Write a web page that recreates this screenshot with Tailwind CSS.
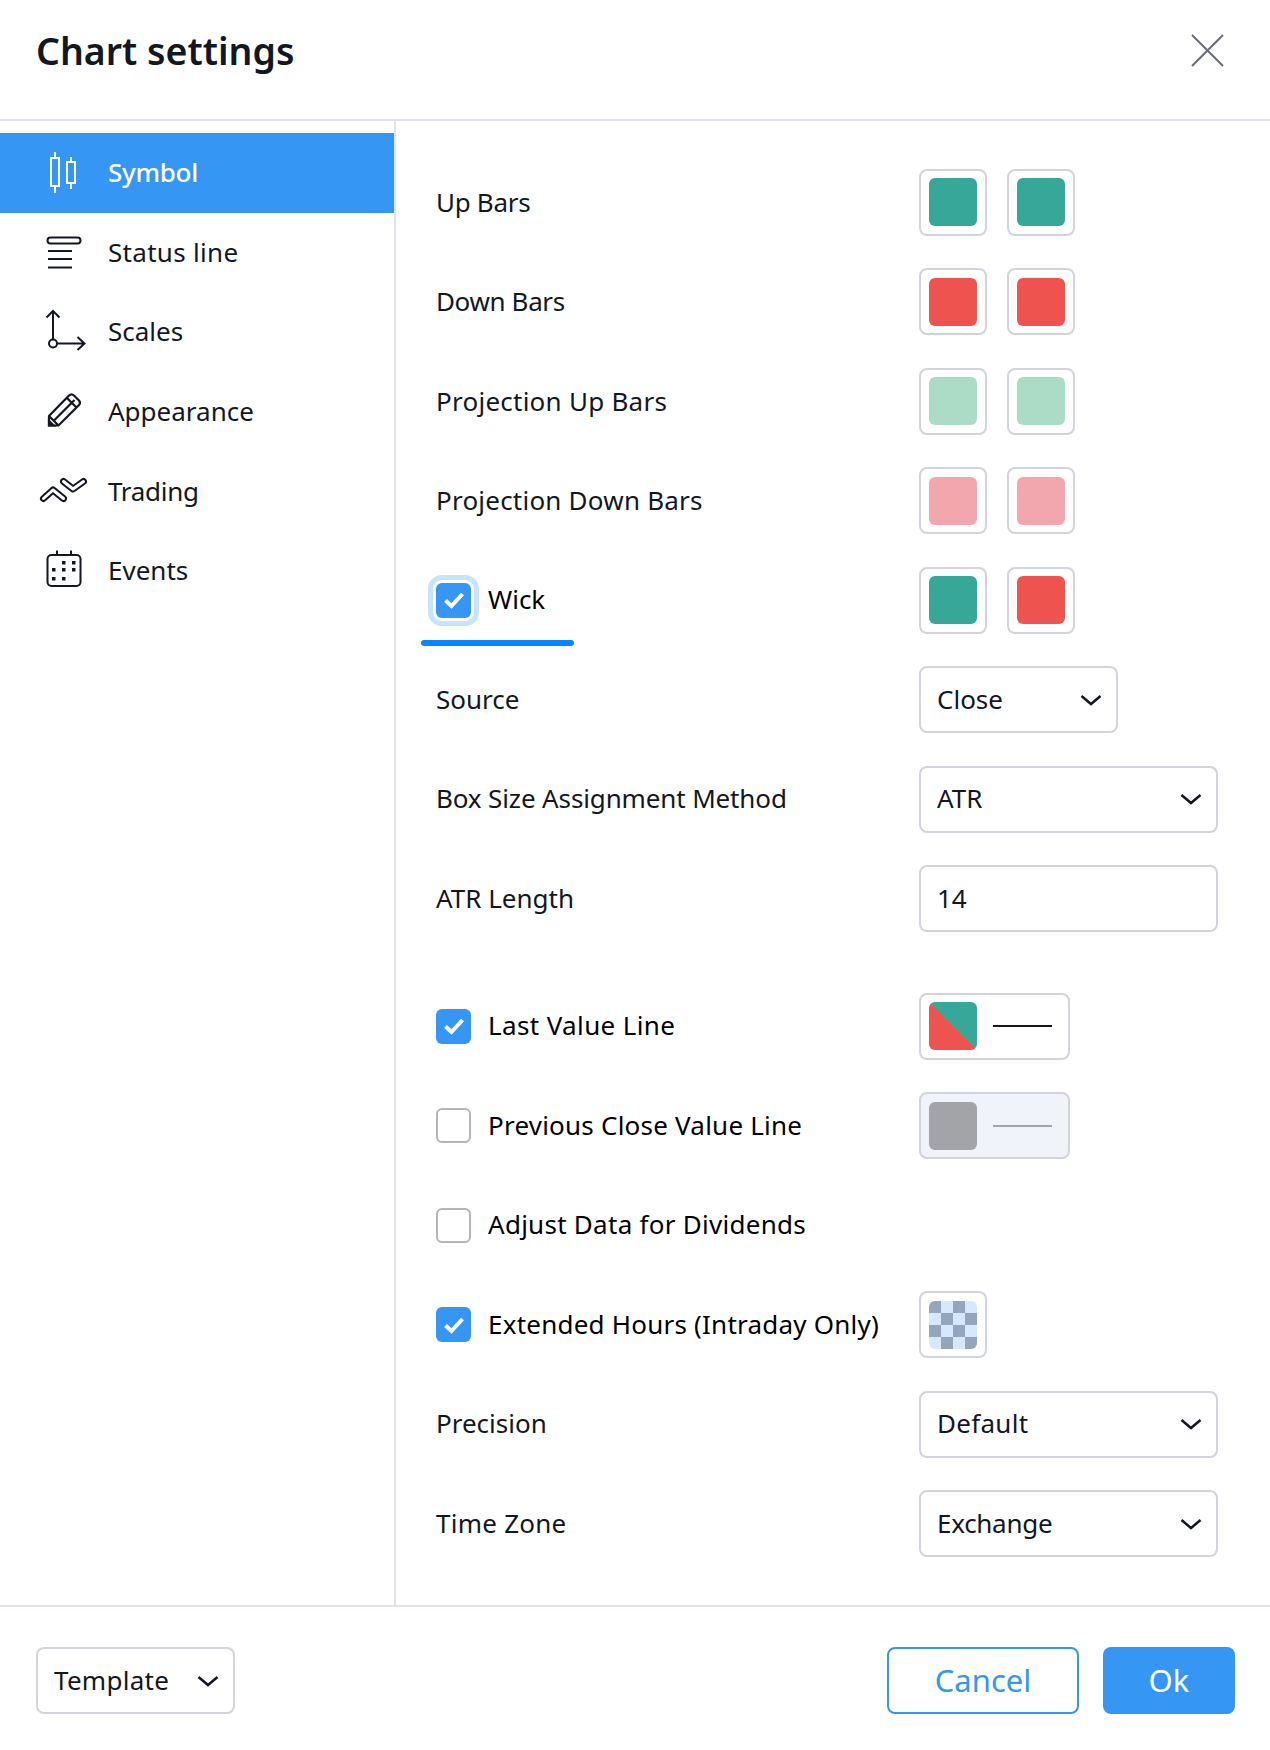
<!DOCTYPE html>
<html>
<head>
  <meta charset="utf-8">
  <title>Chart settings</title>
  <script src="https://cdn.jsdelivr.net/npm/@tailwindcss/browser@4"></script>
</head>
<body class="bg-white">
  <div class="w-[1270px] h-[1750px] flex flex-col bg-white text-[#131722] text-[26px] leading-none font-['Noto_Sans',sans-serif]">

    <!-- header -->
    <div class="h-[121px] shrink-0 border-b-2 border-[#e0e3eb] flex items-center justify-between pl-[36px] pr-[46px] pb-[18px]">
      <div class="text-[37.5px] font-semibold">Chart settings</div>
      <svg width="33" height="33" viewBox="0 0 33 33" fill="none" stroke="#6a6d78" stroke-width="2"><path d="M1 1L32 32M32 1L1 32"/></svg>
    </div>

    <div class="flex h-[1484px] shrink-0">
      <!-- sidebar -->
      <div class="w-[396px] shrink-0 border-r-2 border-[#e0e3eb] pt-[12px]">
        <div class="h-[79.7px] flex items-center gap-[12px] pl-[36px] bg-[#3596f3] text-white">
          <svg width="60" height="48" viewBox="0 0 60 48" fill="none" stroke="currentColor" stroke-width="2"><rect x="15" y="9" width="8" height="28"/><path d="M19 3V9M19 37V44"/><rect x="31" y="13" width="8" height="21"/><path d="M35 8V13M35 34V40"/></svg>
          <span class="pb-[2px] tracking-[-0.3px] font-medium">Symbol</span>
        </div>
        <div class="h-[79.7px] flex items-center gap-[12px] pl-[36px]">
          <svg width="60" height="48" viewBox="0 0 60 48" fill="none" stroke="#131722" stroke-width="2"><rect x="11.500" y="8.500" width="33" height="6" rx="3"/><path d="M12 22H36M12 30H36M12 38.500H36"/></svg>
          <span class="pb-[2px] tracking-[0.3px]">Status line</span>
        </div>
        <div class="h-[79.7px] flex items-center gap-[12px] pl-[36px]">
          <svg width="60" height="48" viewBox="0 0 60 48" fill="none" stroke="#131722" stroke-width="2"><path d="M17 32V3M10.500 9.500L17 3L23.500 9.500M21 35.500H48.500M41.500 29L48.500 35.500L41.500 42"/><circle cx="17" cy="35.500" r="4"/></svg>
          <span class="pb-[2px]">Scales</span>
        </div>
        <div class="h-[79.7px] flex items-center gap-[12px] pl-[36px]">
          <svg width="60" height="48" viewBox="0 0 60 48" fill="none" stroke="#131722" stroke-width="2.200"><path d="M13 37.500V28L33 7.500Q35.500 5 38 7.500L43 12.500Q45 15 43 17L22.500 37.500ZM13 28L22.500 37.500M18 32.500L38.500 12M31 10L40.500 19.500"/><path d="M13 37.500V33L17.500 37.500Z" fill="#131722"/></svg>
          <span class="pb-[2px]">Appearance</span>
        </div>
        <div class="h-[79.7px] flex items-center gap-[12px] pl-[36px]">
          <svg width="60" height="48" viewBox="0 0 60 48" fill="none" stroke-linecap="round" stroke-linejoin="round"><path d="M7.500 30.500L17 22L27.500 30.500M27.500 13.500L37 21L47.500 13.500" stroke="#131722" stroke-width="7"/><path d="M7.500 30.500L17 22L27.500 30.500M27.500 13.500L37 21L47.500 13.500" stroke="#fff" stroke-width="3"/></svg>
          <span class="pb-[2px] tracking-[-0.3px]">Trading</span>
        </div>
        <div class="h-[79.7px] flex items-center gap-[12px] pl-[36px]">
          <svg width="60" height="48" viewBox="0 0 60 48" fill="none" stroke="#131722" stroke-width="2"><rect x="11.500" y="8" width="33" height="31" rx="4"/><path d="M21 3.500V8M35 3.500V8"/><g fill="#131722" stroke="none"><rect x="26" y="14" width="3.500" height="3.500"/><rect x="36" y="14" width="3.500" height="3.500"/><rect x="16" y="21" width="3.500" height="3.500"/><rect x="26" y="21" width="3.500" height="3.500"/><rect x="36" y="21" width="3.500" height="3.500"/><rect x="16" y="30" width="3.500" height="3.500"/><rect x="26" y="30" width="3.500" height="3.500"/></g></svg>
          <span class="pb-[2px]">Events</span>
        </div>
      </div>

      <!-- settings -->
      <div class="flex-1 pl-[40px] pt-[47.5px] flex flex-col gap-[32.5px]">
        <div class="h-[67px] flex items-center">
          <div class="w-[483px] pb-[1px] tracking-[-0.3px]">Up Bars</div>
          <div class="flex gap-[20px]">
            <div class="w-[68px] h-[67px] border-2 border-[#d1d4dc] rounded-[8px] flex items-center justify-center"><div class="w-[48px] h-[48px] rounded-[6px] bg-[#37a79a]"></div></div>
            <div class="w-[68px] h-[67px] border-2 border-[#d1d4dc] rounded-[8px] flex items-center justify-center"><div class="w-[48px] h-[48px] rounded-[6px] bg-[#37a79a]"></div></div>
          </div>
        </div>
        <div class="h-[67px] flex items-center">
          <div class="w-[483px] pb-[2px] tracking-[-0.37px]">Down Bars</div>
          <div class="flex gap-[20px]">
            <div class="w-[68px] h-[67px] border-2 border-[#d1d4dc] rounded-[8px] flex items-center justify-center"><div class="w-[48px] h-[48px] rounded-[6px] bg-[#ef5350]"></div></div>
            <div class="w-[68px] h-[67px] border-2 border-[#d1d4dc] rounded-[8px] flex items-center justify-center"><div class="w-[48px] h-[48px] rounded-[6px] bg-[#ef5350]"></div></div>
          </div>
        </div>
        <div class="h-[67px] flex items-center">
          <div class="w-[483px] pb-[1px] tracking-[0.25px]">Projection Up Bars</div>
          <div class="flex gap-[20px]">
            <div class="w-[68px] h-[67px] border-2 border-[#d1d4dc] rounded-[8px] flex items-center justify-center"><div class="w-[48px] h-[48px] rounded-[6px] bg-[#acdbc6]"></div></div>
            <div class="w-[68px] h-[67px] border-2 border-[#d1d4dc] rounded-[8px] flex items-center justify-center"><div class="w-[48px] h-[48px] rounded-[6px] bg-[#acdbc6]"></div></div>
          </div>
        </div>
        <div class="h-[67px] flex items-center">
          <div class="w-[483px] pb-[2px] tracking-[0.22px]">Projection Down Bars</div>
          <div class="flex gap-[20px]">
            <div class="w-[68px] h-[67px] border-2 border-[#d1d4dc] rounded-[8px] flex items-center justify-center"><div class="w-[48px] h-[48px] rounded-[6px] bg-[#f2a7ae]"></div></div>
            <div class="w-[68px] h-[67px] border-2 border-[#d1d4dc] rounded-[8px] flex items-center justify-center"><div class="w-[48px] h-[48px] rounded-[6px] bg-[#f2a7ae]"></div></div>
          </div>
        </div>
        <div class="h-[67px] flex items-center relative">
          <div class="w-[483px] flex items-center gap-[17px]">
            <div class="w-[35px] h-[35px] rounded-[6px] bg-[#3596f3] flex items-center justify-center ring-[5px] ring-[#c8e3fe] ring-offset-[3px]">
              <svg width="24" height="20" viewBox="0 0 24 20" fill="none" stroke="#fff" stroke-width="4"><path d="M3.500 10.500L9.500 16L20.500 4"/></svg>
            </div>
            <span class="pb-[2px] text-black">Wick</span>
          </div>
          <div class="flex gap-[20px]">
            <div class="w-[68px] h-[67px] border-2 border-[#d1d4dc] rounded-[8px] flex items-center justify-center"><div class="w-[48px] h-[48px] rounded-[6px] bg-[#37a79a]"></div></div>
            <div class="w-[68px] h-[67px] border-2 border-[#d1d4dc] rounded-[8px] flex items-center justify-center"><div class="w-[48px] h-[48px] rounded-[6px] bg-[#ef5350]"></div></div>
          </div>
          <div class="absolute left-[-15px] top-[73px] w-[153px] h-[6px] rounded-full bg-[#0a84ff]"></div>
        </div>
        <div class="h-[67px] flex items-center">
          <div class="w-[483px] pb-[2px]">Source</div>
          <div class="w-[199px] h-[67px] border-2 border-[#d1d4dc] rounded-[8px] flex items-center justify-between pl-[16px] pr-[14px]">
            <span class="pb-[2px]">Close</span>
            <svg width="22" height="12" viewBox="0 0 22 12" fill="none" stroke="#131722" stroke-width="2.500"><path d="M1.500 2L11 10L20.500 2"/></svg>
          </div>
        </div>
        <div class="h-[67px] flex items-center">
          <div class="w-[483px] pb-[2px] tracking-[-0.13px]">Box Size Assignment Method</div>
          <div class="w-[299px] h-[67px] border-2 border-[#d1d4dc] rounded-[8px] flex items-center justify-between pl-[16px] pr-[14px]">
            <span class="pb-[2px]">ATR</span>
            <svg width="22" height="12" viewBox="0 0 22 12" fill="none" stroke="#131722" stroke-width="2.500"><path d="M1.500 2L11 10L20.500 2"/></svg>
          </div>
        </div>
        <div class="h-[67px] flex items-center">
          <div class="w-[483px] pb-[2px]">ATR Length</div>
          <div class="w-[299px] h-[67px] border-2 border-[#d1d4dc] rounded-[8px] flex items-center pl-[16px]"><span class="pb-[2px]">14</span></div>
        </div>
        <div class="h-[67px] flex items-center mt-[28px]">
          <div class="w-[483px] flex items-center gap-[17px]">
            <div class="w-[35px] h-[35px] rounded-[6px] bg-[#3596f3] flex items-center justify-center">
              <svg width="24" height="20" viewBox="0 0 24 20" fill="none" stroke="#fff" stroke-width="4"><path d="M3.500 10.500L9.500 16L20.500 4"/></svg>
            </div>
            <span class="pb-[2px] text-black tracking-[0.37px]">Last Value Line</span>
          </div>
          <div class="w-[151px] h-[67px] border-2 border-[#d1d4dc] rounded-[8px] flex items-center pl-[8px] gap-[16px]">
            <div class="w-[48px] h-[48px] rounded-[6px] bg-[linear-gradient(to_top_right,#ef5350_50%,#37a79a_50%)]"></div>
            <div class="w-[59px] h-[2px] bg-[#131722]"></div>
          </div>
        </div>
        <div class="h-[67px] flex items-center">
          <div class="w-[483px] flex items-center gap-[17px]">
            <div class="w-[35px] h-[35px] rounded-[6px] border-2 border-[#b2b5be]"></div>
            <span class="pb-[2px] text-black tracking-[0.22px]">Previous Close Value Line</span>
          </div>
          <div class="w-[151px] h-[67px] border-2 border-[#d1d4dc] rounded-[8px] bg-[#f0f3fa] flex items-center pl-[8px] gap-[16px]">
            <div class="w-[48px] h-[48px] rounded-[6px] bg-[#a3a4a8]"></div>
            <div class="w-[59px] h-[2px] bg-[#a3a4a8]"></div>
          </div>
        </div>
        <div class="h-[67px] flex items-center">
          <div class="w-[483px] flex items-center gap-[17px]">
            <div class="w-[35px] h-[35px] rounded-[6px] border-2 border-[#b2b5be]"></div>
            <span class="pb-[2px] text-black tracking-[0.27px]">Adjust Data for Dividends</span>
          </div>
        </div>
        <div class="h-[67px] flex items-center">
          <div class="w-[483px] flex items-center gap-[17px]">
            <div class="w-[35px] h-[35px] rounded-[6px] bg-[#3596f3] flex items-center justify-center">
              <svg width="24" height="20" viewBox="0 0 24 20" fill="none" stroke="#fff" stroke-width="4"><path d="M3.500 10.500L9.500 16L20.500 4"/></svg>
            </div>
            <span class="pb-[2px] text-black tracking-[0.22px] whitespace-nowrap">Extended Hours (Intraday Only)</span>
          </div>
          <div class="w-[68px] h-[67px] border-2 border-[#d1d4dc] rounded-[8px] flex items-center justify-center">
            <svg class="rounded-[6px]" width="48" height="48" viewBox="0 0 4 4"><rect width="4" height="4" fill="#d6e8fc"/><path d="M0 0h1v1H0zM2 0h1v1H2zM1 1h1v1H1zM3 1h1v1H3zM0 2h1v1H0zM2 2h1v1H2zM1 3h1v1H1zM3 3h1v1H3z" fill="#94a6be"/></svg>
          </div>
        </div>
        <div class="h-[67px] flex items-center">
          <div class="w-[483px] pb-[2px]">Precision</div>
          <div class="w-[299px] h-[67px] border-2 border-[#d1d4dc] rounded-[8px] flex items-center justify-between pl-[16px] pr-[14px]">
            <span class="pb-[2px] tracking-[0.3px]">Default</span>
            <svg width="22" height="12" viewBox="0 0 22 12" fill="none" stroke="#131722" stroke-width="2.500"><path d="M1.500 2L11 10L20.500 2"/></svg>
          </div>
        </div>
        <div class="h-[67px] flex items-center">
          <div class="w-[483px] pb-[2px] tracking-[0.25px]">Time Zone</div>
          <div class="w-[299px] h-[67px] border-2 border-[#d1d4dc] rounded-[8px] flex items-center justify-between pl-[16px] pr-[14px]">
            <span class="pb-[2px] tracking-[-0.28px]">Exchange</span>
            <svg width="22" height="12" viewBox="0 0 22 12" fill="none" stroke="#131722" stroke-width="2.500"><path d="M1.500 2L11 10L20.500 2"/></svg>
          </div>
        </div>
      </div>
    </div>

    <!-- footer -->
    <div class="flex-1 border-t-2 border-[#e0e3eb] pt-[40px] pl-[36px] pr-[35px] flex justify-between items-start">
      <div class="w-[199px] h-[67px] border-2 border-[#d1d4dc] rounded-[8px] flex items-center justify-between pl-[16px] pr-[14px]">
        <span class="pb-[2px] tracking-[0.28px]">Template</span>
        <svg width="22" height="12" viewBox="0 0 22 12" fill="none" stroke="#131722" stroke-width="2.500"><path d="M1.500 2L11 10L20.500 2"/></svg>
      </div>
      <div class="flex gap-[24px]">
        <div class="w-[192px] h-[67px] border-2 border-[#3596f3] rounded-[8px] text-[#3596f3] text-[31px] flex items-center justify-center">Cancel</div>
        <div class="w-[132px] h-[67px] bg-[#3596f3] rounded-[8px] text-white text-[31px] flex items-center justify-center">Ok</div>
      </div>
    </div>
  </div>
</body>
</html>
